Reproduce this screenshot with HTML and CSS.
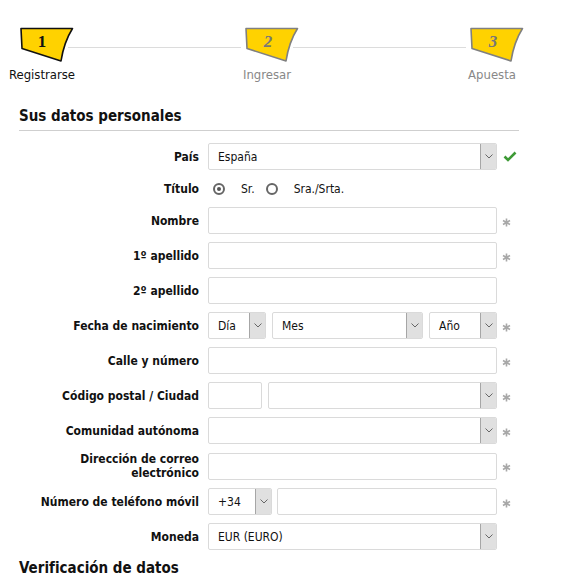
FILE: index.html
```html
<!DOCTYPE html>
<html lang="es">
<head>
  <meta charset="UTF-8">
  <title>Registrarse</title>
  <link rel="stylesheet" href="styles.css">
</head>
<body>
  <div class="steps">
    <div class="step step-active">
      <svg class="step-icon" width="64" height="38" viewBox="0 0 64 38">
        <path d="M11 2.5 L62.5 2.5 Q54 16 51 35 L12 22.5 Z" fill="#ffd200" stroke="#111" stroke-width="1.6" stroke-linejoin="round"/>
        <text x="32" y="21" text-anchor="middle">1</text>
      </svg>
      <span class="step-label">Registrarse</span>
    </div>
    <div class="step-line"></div>
    <div class="step">
      <svg class="step-icon" width="64" height="38" viewBox="0 0 64 38">
        <path d="M11 2.5 L62.5 2.5 Q54 16 51 35 L12 22.5 Z" fill="#ffd200" stroke="#808080" stroke-width="1.6" stroke-linejoin="round"/>
        <text x="33" y="21" text-anchor="middle">2</text>
      </svg>
      <span class="step-label">Ingresar</span>
    </div>
    <div class="step-line"></div>
    <div class="step">
      <svg class="step-icon" width="64" height="38" viewBox="0 0 64 38">
        <path d="M11 2.5 L62.5 2.5 Q54 16 51 35 L12 22.5 Z" fill="#ffd200" stroke="#808080" stroke-width="1.6" stroke-linejoin="round"/>
        <text x="33" y="21" text-anchor="middle">3</text>
      </svg>
      <span class="step-label">Apuesta</span>
    </div>
  </div>

  <h2 class="section-title">Sus datos personales</h2>

  <form class="form">
    <div class="row">
      <label class="label">País</label>
      <div class="select"><span class="select-value">España</span><span class="select-arrow"><svg width="8" height="5" viewBox="0 0 8 5"><path d="M0.5 0.5 L4 4 L7.5 0.5" fill="none" stroke="#666" stroke-width="1"/></svg></span></div>
      <span class="mark"><svg class="check" width="14" height="11" viewBox="0 0 14 11"><path d="M1.5 5.5 L5 9 L12.5 1.5" fill="none" stroke="#3e9a36" stroke-width="2.6"/></svg></span>
    </div>

    <div class="row row-title">
      <label class="label">Título</label>
      <div class="radios">
        <span class="radio radio-on"></span><span class="radio-text">Sr.</span>
        <span class="radio"></span><span class="radio-text">Sra./Srta.</span>
      </div>
      <span class="mark"></span>
    </div>

    <div class="row">
      <label class="label">Nombre</label>
      <input class="field" type="text">
      <span class="mark"><svg class="star" width="9" height="9" viewBox="0 0 10 10"><path d="M5 0.5 V9.5 M1.1 2.75 L8.9 7.25 M1.1 7.25 L8.9 2.75" stroke="#a8a8a8" stroke-width="1.8"/></svg></span>
    </div>

    <div class="row">
      <label class="label">1º apellido</label>
      <input class="field" type="text">
      <span class="mark"><svg class="star" width="9" height="9" viewBox="0 0 10 10"><path d="M5 0.5 V9.5 M1.1 2.75 L8.9 7.25 M1.1 7.25 L8.9 2.75" stroke="#a8a8a8" stroke-width="1.8"/></svg></span>
    </div>

    <div class="row">
      <label class="label">2º apellido</label>
      <input class="field" type="text">
      <span class="mark"></span>
    </div>

    <div class="row">
      <label class="label">Fecha de nacimiento</label>
      <div class="group">
        <div class="select select-day"><span class="select-value">Día</span><span class="select-arrow"><svg width="8" height="5" viewBox="0 0 8 5"><path d="M0.5 0.5 L4 4 L7.5 0.5" fill="none" stroke="#666" stroke-width="1"/></svg></span></div>
        <div class="select select-grow"><span class="select-value">Mes</span><span class="select-arrow"><svg width="8" height="5" viewBox="0 0 8 5"><path d="M0.5 0.5 L4 4 L7.5 0.5" fill="none" stroke="#666" stroke-width="1"/></svg></span></div>
        <div class="select select-year"><span class="select-value">Año</span><span class="select-arrow"><svg width="8" height="5" viewBox="0 0 8 5"><path d="M0.5 0.5 L4 4 L7.5 0.5" fill="none" stroke="#666" stroke-width="1"/></svg></span></div>
      </div>
      <span class="mark"><svg class="star" width="9" height="9" viewBox="0 0 10 10"><path d="M5 0.5 V9.5 M1.1 2.75 L8.9 7.25 M1.1 7.25 L8.9 2.75" stroke="#a8a8a8" stroke-width="1.8"/></svg></span>
    </div>

    <div class="row">
      <label class="label">Calle y número</label>
      <input class="field" type="text">
      <span class="mark"><svg class="star" width="9" height="9" viewBox="0 0 10 10"><path d="M5 0.5 V9.5 M1.1 2.75 L8.9 7.25 M1.1 7.25 L8.9 2.75" stroke="#a8a8a8" stroke-width="1.8"/></svg></span>
    </div>

    <div class="row">
      <label class="label">Código postal / Ciudad</label>
      <div class="group">
        <input class="field field-zip" type="text">
        <div class="select select-grow"><span class="select-value"></span><span class="select-arrow"><svg width="8" height="5" viewBox="0 0 8 5"><path d="M0.5 0.5 L4 4 L7.5 0.5" fill="none" stroke="#666" stroke-width="1"/></svg></span></div>
      </div>
      <span class="mark"><svg class="star" width="9" height="9" viewBox="0 0 10 10"><path d="M5 0.5 V9.5 M1.1 2.75 L8.9 7.25 M1.1 7.25 L8.9 2.75" stroke="#a8a8a8" stroke-width="1.8"/></svg></span>
    </div>

    <div class="row">
      <label class="label">Comunidad autónoma</label>
      <div class="select"><span class="select-value"></span><span class="select-arrow"><svg width="8" height="5" viewBox="0 0 8 5"><path d="M0.5 0.5 L4 4 L7.5 0.5" fill="none" stroke="#666" stroke-width="1"/></svg></span></div>
      <span class="mark"><svg class="star" width="9" height="9" viewBox="0 0 10 10"><path d="M5 0.5 V9.5 M1.1 2.75 L8.9 7.25 M1.1 7.25 L8.9 2.75" stroke="#a8a8a8" stroke-width="1.8"/></svg></span>
    </div>

    <div class="row">
      <label class="label">Dirección de correo<br>electrónico</label>
      <input class="field" type="text">
      <span class="mark"><svg class="star" width="9" height="9" viewBox="0 0 10 10"><path d="M5 0.5 V9.5 M1.1 2.75 L8.9 7.25 M1.1 7.25 L8.9 2.75" stroke="#a8a8a8" stroke-width="1.8"/></svg></span>
    </div>

    <div class="row">
      <label class="label">Número de teléfono móvil</label>
      <div class="group">
        <div class="select select-prefix"><span class="select-value">+34</span><span class="select-arrow"><svg width="8" height="5" viewBox="0 0 8 5"><path d="M0.5 0.5 L4 4 L7.5 0.5" fill="none" stroke="#666" stroke-width="1"/></svg></span></div>
        <input class="field field-grow" type="text">
      </div>
      <span class="mark"><svg class="star" width="9" height="9" viewBox="0 0 10 10"><path d="M5 0.5 V9.5 M1.1 2.75 L8.9 7.25 M1.1 7.25 L8.9 2.75" stroke="#a8a8a8" stroke-width="1.8"/></svg></span>
    </div>

    <div class="row">
      <label class="label">Moneda</label>
      <div class="select"><span class="select-value">EUR (EURO)</span><span class="select-arrow"><svg width="8" height="5" viewBox="0 0 8 5"><path d="M0.5 0.5 L4 4 L7.5 0.5" fill="none" stroke="#666" stroke-width="1"/></svg></span></div>
      <span class="mark"></span>
    </div>
  </form>

  <h2 class="section-title">Verificación de datos</h2>
</body>
</html>
```

FILE: styles.css
```css
body {
  margin: 0;
  font-family: Tahoma, "DejaVu Sans Condensed", "DejaVu Sans", sans-serif;
  font-size: 12px;
  color: #111;
  background: #fff;
}

/* steps */
.steps {
  display: flex;
  align-items: flex-start;
  padding: 26px 44px 0 8px;
}
.step {
  display: flex;
  flex-direction: column;
  align-items: center;
  width: 68px;
  flex: none;
}
.step-icon {
  display: block;
}
.step-icon text {
  font-family: "Liberation Serif", serif;
  font-weight: bold;
  font-size: 17px;
  fill: #777;
  font-style: italic;
}
.step-active .step-icon text {
  fill: #111;
  font-style: normal;
}
.step-label {
  margin-top: 3px;
  line-height: 16px;
  font-size: 13px;
  color: #888;
}
.step-active .step-label {
  color: #111;
}
.step-line {
  flex: 1;
  height: 1px;
  background: #dcdcdc;
  margin: 21px -8px 0 -8px;
}

/* sections */
.section-title {
  width: 500px;
  margin: 23px 0 0 19px;
  padding-bottom: 4px;
  border-bottom: 1px solid #cfcfcf;
  font-size: 15px;
  line-height: 20px;
  font-weight: bold;
  color: #111;
}
.form + .section-title {
  margin-top: 8px;
}

/* form rows */
.form {
  display: flex;
  flex-direction: column;
  gap: 8px;
  margin-top: 12px;
}
.row {
  display: grid;
  grid-template-columns: 199px 289px 20px;
  column-gap: 9px;
  align-items: center;
}
.row-title {
  height: 21px;
}
.label {
  text-align: right;
  font-weight: bold;
  line-height: 14px;
  color: #111;
}
.field,
.select {
  box-sizing: border-box;
  height: 27px;
  border: 1px solid #dadada;
  border-radius: 2px;
  background: #fff;
  font: inherit;
  margin: 0;
}
.field {
  width: 100%;
  padding: 0 9px;
}
.select {
  display: flex;
  align-items: center;
  width: 100%;
  overflow: hidden;
}
.select-value {
  flex: 1;
  padding-left: 9px;
  white-space: nowrap;
}
.select-arrow {
  box-sizing: border-box;
  width: 17px;
  height: 27px;
  margin: -1px -1px -1px 0;
  display: flex;
  align-items: center;
  justify-content: center;
  background: #e0e0e0;
  border: 1px solid #a6a6a6;
}
.group {
  display: flex;
  gap: 6px;
}
.select-day {
  width: 58px;
}
.select-year {
  width: 68px;
}
.select-grow,
.field-grow {
  flex: 1;
  min-width: 0;
}
.field-zip {
  width: 54px;
  flex: none;
}
.select-prefix {
  width: 64px;
  flex: none;
}
.group .field-grow {
  margin-left: -1px;
}

.mark {
  display: flex;
  align-items: center;
}
.star {
  margin: 3px 0 0 -4px;
}
.check {
  margin: -1px 0 0 -3px;
}

/* radios */
.radios {
  display: flex;
  align-items: center;
  padding-left: 5px;
}
.radio {
  box-sizing: border-box;
  width: 12px;
  height: 12px;
  border: 2px solid #666;
  border-radius: 50%;
  display: flex;
  align-items: center;
  justify-content: center;
}
.radio-on::after {
  content: "";
  width: 4px;
  height: 4px;
  border-radius: 50%;
  background: #555;
}
.radio-text {
  margin: 0 10px 0 16px;
  color: #111;
}
.radio-text:last-child {
  margin-right: 0;
}
.radio + .radio-text + .radio {
  margin-left: 1px;
}
```
